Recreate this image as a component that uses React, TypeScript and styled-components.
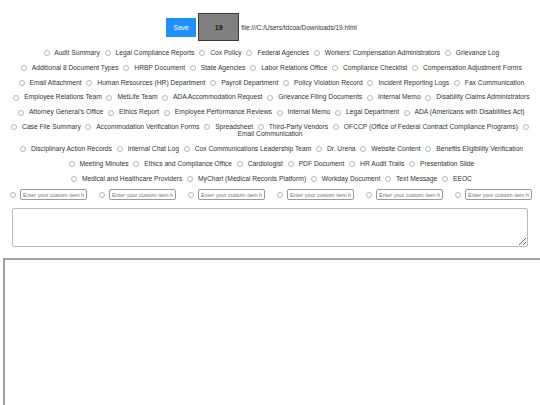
import React from 'react';
import styled, { createGlobalStyle } from 'styled-components';

const GlobalStyle = createGlobalStyle`
  html, body {
    margin: 0;
    padding: 0;
    background: #ffffff;
    overflow: hidden;
  }
  body {
    font-family: "Liberation Sans", Arial, sans-serif;
    color: #222;
  }
`

const Page = styled.div`
  width: 540px;
  min-height: 405px;
`

const Toolbar = styled.div`
  display: flex;
  justify-content: center;
  align-items: center;
  padding-top: 13px;
  padding-right: 17px;
`

const SaveButton = styled.button`
  width: 30px;
  height: 19px;
  margin-right: 2px;
  border: none;
  padding: 0;
  background: #1e90ff;
  color: #ffffff;
  font-family: "Liberation Sans", Arial, sans-serif;
  font-size: 6.7px;
`

const PageNumber = styled.div`
  width: 41px;
  height: 28px;
  box-sizing: border-box;
  display: flex;
  align-items: center;
  justify-content: center;
  background: #808080;
  border: 1px solid #3a3a3a;
  font-size: 7px;
  font-weight: 700;
  color: #111;
`

const FilePath = styled.span`
  margin-left: 2px;
  font-size: 6.5px;
  color: #333;
`

const Choices = styled.div`
  margin-top: 8px;
  padding: 0 4px;
`

const ChoiceRow = styled.div`
  margin-bottom: 7.6px;
  text-align: center;
  font-size: 6.7px;
  line-height: normal;
  color: #333;
`

const Radio = styled.input.attrs({ type: 'radio' })`
  appearance: none;
  -webkit-appearance: none;
  box-sizing: border-box;
  width: 6px;
  height: 6px;
  margin: 0 3.2px 0 2.8px;
  padding: 0;
  border: 1px solid #b8b8b8;
  border-radius: 50%;
  background: #ffffff;
  vertical-align: middle;
`

const CustomRow = styled.div`
  display: flex;
  align-items: center;
  gap: 12px;
  padding: 0 0 0 10px;
`

const CustomItem = styled.label`
  display: flex;
  align-items: center;

  ${Radio} {
    margin: 0 4px 0 0;
  }
`

const CustomInput = styled.input`
  box-sizing: border-box;
  width: 67px;
  height: 11px;
  margin: 0;
  padding: 0 2px;
  border: 1px solid #9a9a9a;
  border-radius: 2px;
  font-family: "Liberation Sans", Arial, sans-serif;
  font-size: 5.5px;
  &::placeholder {
    color: #777;
  }
`

const Notes = styled.textarea`
  display: block;
  box-sizing: border-box;
  width: 516px;
  height: 39px;
  margin: 8px 0 0 12px;
  border: 1px solid #b9b9b9;
  border-radius: 2px;
  resize: both;
`

const Preview = styled.div`
  width: 560px;
  height: 200px;
  margin: 11px 0 0 3px;
  border-style: solid;
  border-width: 2px;
  border-color: #a0a0a0 #e6e6e6 #e6e6e6 #a0a0a0;
`

const rows: string[][] = [
  ['Audit Summary', 'Legal Compliance Reports', 'Cox Policy', 'Federal Agencies', "Workers' Compensation Administrators", 'Grievance Log'],
  ['Additional 8 Document Types', 'HRBP Document', 'State Agencies', 'Labor Relations Office', 'Compliance Checklist', 'Compensation Adjustment Forms'],
  ['Email Attachment', 'Human Resources (HR) Department', 'Payroll Department', 'Policy Violation Record', 'Incident Reporting Logs', 'Fax Communication'],
  ['Employee Relations Team', 'MetLife Team', 'ADA Accommodation Request', 'Grievance Filing Documents', 'Internal Memo', 'Disability Claims Administrators'],
  ["Attorney General's Office", 'Ethics Report', 'Employee Performance Reviews', 'Internal Memo', 'Legal Department', 'ADA (Americans with Disabilities Act)'],
  ['Case File Summary', 'Accommodation Verification Forms', 'Spreadsheet', 'Third-Party Vendors', 'OFCCP (Office of Federal Contract Compliance Programs)', 'Email Communication'],
  ['Disciplinary Action Records', 'Internal Chat Log', 'Cox Communications Leadership Team', 'Dr. Urena', 'Website Content', 'Benefits Eligibility Verification'],
  ['Meeting Minutes', 'Ethics and Compliance Office', 'Cardiologist', 'PDF Document', 'HR Audit Trails', 'Presentation Slide'],
  ['Medical and Healthcare Providers', 'MyChart (Medical Records Platform)', 'Workday Document', 'Text Message', 'EEOC'],
];

export default function App() {
  return (
    <>
      <GlobalStyle />
      <Page>
        <Toolbar>
          <SaveButton>Save</SaveButton>
          <PageNumber>19</PageNumber>
          <FilePath>file:///C:/Users/tdcoa/Downloads/19.html</FilePath>
        </Toolbar>

        <Choices>
          {rows.map((row, r) => (
            <ChoiceRow key={r}>
              {row.map((item, i) => (
                <React.Fragment key={i}>
                  <Radio name="doc" />
                  {' '}{item}{' '}
                </React.Fragment>
              ))}
            </ChoiceRow>
          ))}
        </Choices>

        <CustomRow>
          {[0, 1, 2, 3, 4, 5].map((n) => (
            <CustomItem key={n}>
              <Radio name="doc" />
              <CustomInput placeholder="Enter your custom item here" />
            </CustomItem>
          ))}
        </CustomRow>

        <Notes />
        <Preview />
      </Page>
    </>
  );
}
